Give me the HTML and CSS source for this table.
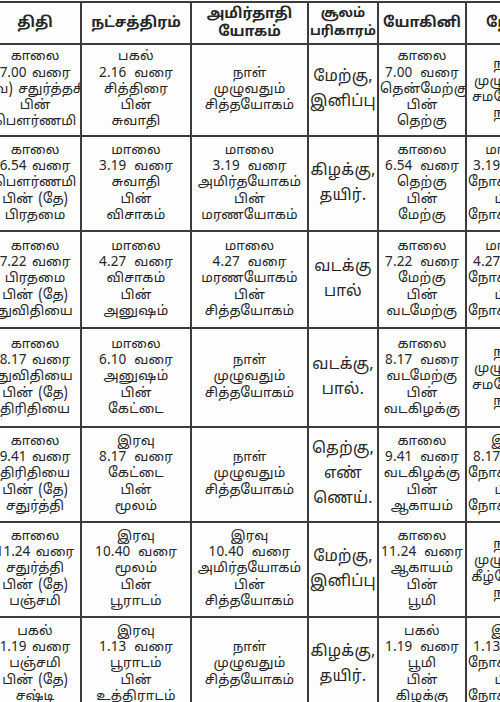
FILE: index.html
```html
<!DOCTYPE html>
<html lang="ta">
<head>
<meta charset="utf-8">
<title>பஞ்சாங்கம்</title>
<link rel="stylesheet" href="styles.css">
</head>
<body>
<div class="sheet">
<table class="panchang">
<colgroup>
<col class="c1"><col class="c2"><col class="c3"><col class="c4"><col class="c5"><col class="c6">
</colgroup>
<thead>
<tr class="hd">
<th>திதி</th>
<th>நட்சத்திரம்</th>
<th>அமிர்தாதி<br>யோகம்</th>
<th class="small">சூலம்<br>பரிகாரம்</th>
<th>யோகினி</th>
<th>நேரம்</th>
</tr>
</thead>
<tbody>
<tr class="r1">
<td class="first">காலை<br>7.00 வரை<br>(வ) சதுர்த்தசி<br>பின்<br>பௌர்ணமி</td>
<td>பகல்<br>2.16 வரை<br>சித்திரை<br>பின்<br>சுவாதி</td>
<td>நாள்<br>முழுவதும்<br>சித்தயோகம்</td>
<td class="big">மேற்கு,<br>இனிப்பு</td>
<td>காலை<br>7.00 வரை<br>தென்மேற்கு<br>பின்<br>தெற்கு</td>
<td>நாள்<br>முழுவதும்<br>சமநோக்கு<br>நாள்</td>
</tr>
<tr class="r2">
<td class="first">காலை<br>6.54 வரை<br>பௌர்ணமி<br>பின் (தே)<br>பிரதமை</td>
<td>மாலை<br>3.19 வரை<br>சுவாதி<br>பின்<br>விசாகம்</td>
<td>மாலை<br>3.19 வரை<br>அமிர்தயோகம்<br>பின்<br>மரணயோகம்</td>
<td class="big">கிழக்கு,<br>தயிர்.</td>
<td>காலை<br>6.54 வரை<br>தெற்கு<br>பின்<br>மேற்கு</td>
<td>மாலை<br>3.19 வரை<br>நோக்கு நாள்<br>பின்<br>நோக்கு நாள்</td>
</tr>
<tr class="r3">
<td class="first">காலை<br>7.22 வரை<br>பிரதமை<br>பின் (தே)<br>துவிதியை</td>
<td>மாலை<br>4.27 வரை<br>விசாகம்<br>பின்<br>அனுஷம்</td>
<td>மாலை<br>4.27 வரை<br>மரணயோகம்<br>பின்<br>சித்தயோகம்</td>
<td class="big">வடக்கு<br>பால்</td>
<td>காலை<br>7.22 வரை<br>மேற்கு<br>பின்<br>வடமேற்கு</td>
<td>மாலை<br>4.27 வரை<br>நோக்கு நாள்<br>பின்<br>நோக்கு நாள்</td>
</tr>
<tr class="r4">
<td class="first">காலை<br>8.17 வரை<br>துவிதியை<br>பின் (தே)<br>திரிதியை</td>
<td>மாலை<br>6.10 வரை<br>அனுஷம்<br>பின்<br>கேட்டை</td>
<td>நாள்<br>முழுவதும்<br>சித்தயோகம்</td>
<td class="big">வடக்கு,<br>பால்.</td>
<td>காலை<br>8.17 வரை<br>வடமேற்கு<br>பின்<br>வடகிழக்கு</td>
<td>நாள்<br>முழுவதும்<br>சமநோக்கு<br>நாள்</td>
</tr>
<tr class="r5">
<td class="first">காலை<br>9.41 வரை<br>திரிதியை<br>பின் (தே)<br>சதுர்த்தி</td>
<td>இரவு<br>8.17 வரை<br>கேட்டை<br>பின்<br>மூலம்</td>
<td>நாள்<br>முழுவதும்<br>சித்தயோகம்</td>
<td class="big">தெற்கு,<br>எண்<br>ணெய்.</td>
<td>காலை<br>9.41 வரை<br>வடகிழக்கு<br>பின்<br>ஆகாயம்</td>
<td>இரவு<br>8.17 வரை<br>நோக்கு நாள்<br>பின்<br>நோக்கு நாள்</td>
</tr>
<tr class="r6">
<td class="first">காலை<br>11.24 வரை<br>சதுர்த்தி<br>பின் (தே)<br>பஞ்சமி</td>
<td>இரவு<br>10.40 வரை<br>மூலம்<br>பின்<br>பூராடம்</td>
<td>இரவு<br>10.40 வரை<br>அமிர்தயோகம்<br>பின்<br>சித்தயோகம்</td>
<td class="big">மேற்கு,<br>இனிப்பு</td>
<td>காலை<br>11.24 வரை<br>ஆகாயம்<br>பின்<br>பூமி</td>
<td>நாள்<br>முழுவதும்<br>கீழ்நோக்கு<br>நாள்</td>
</tr>
<tr class="r7">
<td class="first">பகல்<br>1.19 வரை<br>பஞ்சமி<br>பின் (தே)<br>சஷ்டி</td>
<td>இரவு<br>1.13 வரை<br>பூராடம்<br>பின்<br>உத்திராடம்</td>
<td>நாள்<br>முழுவதும்<br>சித்தயோகம்</td>
<td class="big">கிழக்கு,<br>தயிர்.</td>
<td>பகல்<br>1.19 வரை<br>பூமி<br>பின்<br>கிழக்கு</td>
<td>இரவு<br>1.13 வரை<br>நோக்கு நாள்<br>பின்<br>நோக்கு நாள்</td>
</tr>
</tbody>
</table>
</div>
</body>
</html>
```
FILE: styles.css
```css
html, body {
  margin: 0;
  padding: 0;
  background: #fdfdfd;
  overflow: hidden;
}
.sheet {
  width: 500px;
  height: 702px;
  overflow: hidden;
  padding-top: 1px;
}
.panchang {
  margin-left: -12px;
  border-collapse: collapse;
  table-layout: fixed;
  width: 565px;
  font-family: "Noto Sans Tamil", "Lohit Tamil", "Noto Serif Tamil", "Noto Sans", sans-serif;
  color: #262626;
}
.c1 { width: 92px; }
.c2 { width: 110px; }
.c3 { width: 117px; }
.c4 { width: 70px; }
.c5 { width: 88px; }
.c6 { width: 88px; }
.panchang th,
.panchang td {
  border: 2px solid #3c3c3c;
  text-align: center;
  vertical-align: middle;
  padding: 0 1px;
  font-size: 13.5px;
  letter-spacing: 0.2px;
  word-spacing: 4px;
  line-height: 16.3px;
  white-space: nowrap;
  overflow: hidden;
}
.panchang td.first {
  word-spacing: 2px;
  letter-spacing: 0;
  padding: 0;
}
.panchang th {
  font-size: 14.5px;
  letter-spacing: 0;
  word-spacing: 0;
  font-weight: bold;
  line-height: 18px;
  height: 40px;
}
.panchang th.small {
  font-size: 13px;
}
.panchang td.big {
  font-size: 15.5px;
  letter-spacing: 0.3px;
  line-height: 25px;
}
.r1 td { height: 90px; }
.r2 td { height: 93px; }
.r3 td { height: 95px; }
.r4 td { height: 97px; }
.r5 td { height: 93px; }
.r6 td { height: 93px; }
.r7 td { height: 93px; }
```
